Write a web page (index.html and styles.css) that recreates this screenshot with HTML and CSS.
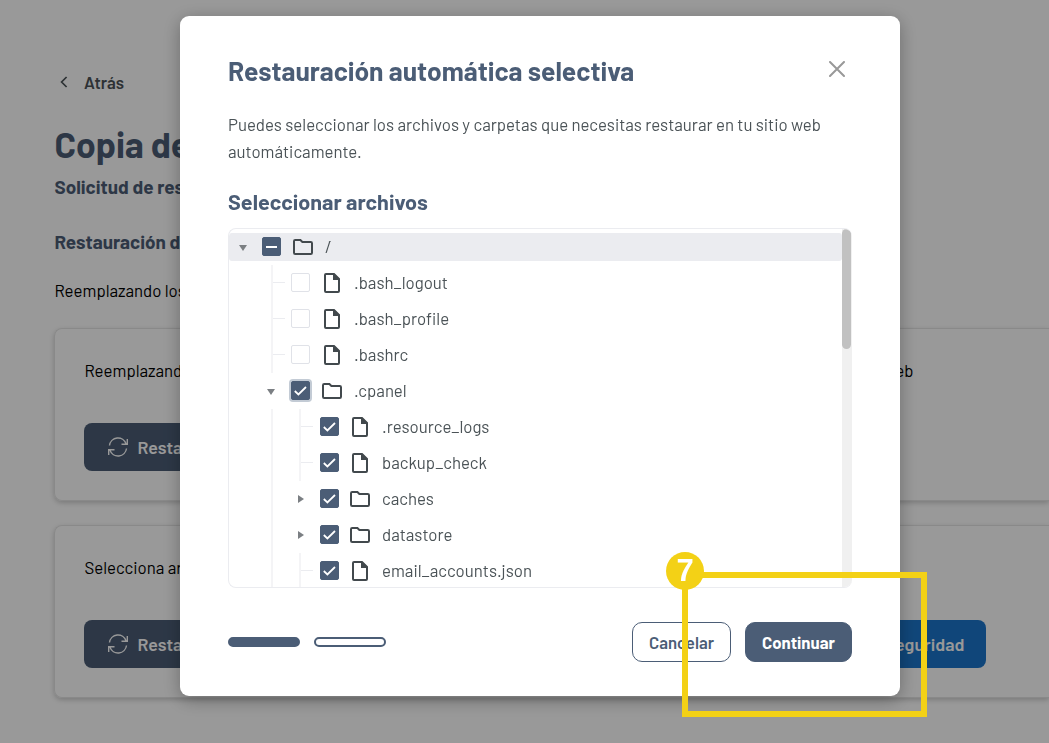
FILE: index.html
```html
<!DOCTYPE html>
<html lang="es">
<head>
    <meta charset="UTF-8">
    <meta name="viewport" content="width=device-width, initial-scale=1.0">
    <title>Copia de seguridad</title>
    <link rel="stylesheet" href="styles.css">
</head>
<body>

    <!-- Iconos -->
    <svg class="sprite" xmlns="http://www.w3.org/2000/svg">
        <symbol id="folder" viewBox="0 0 20 16">
            <path d="M1 2.2Q1 1 2.2 1H7.4L9.4 3H17.8Q19 3 19 4.2V13.8Q19 15 17.8 15H2.2Q1 15 1 13.8Z" fill="none" stroke="#42494d" stroke-width="2"/>
        </symbol>
        <symbol id="file" viewBox="0 0 16 20">
            <path d="M1 2Q1 1 2 1H10L15 6V18Q15 19 14 19H2Q1 19 1 18Z" fill="none" stroke="#42494d" stroke-width="2"/>
            <path d="M9 1H10.5L15.5 6V7H9Z" fill="#42494d"/>
        </symbol>
        <symbol id="check" viewBox="0 0 19 19">
            <path d="M3.8 10L7.4 13.4L15 6" fill="none" stroke="#fff" stroke-width="1.8"/>
        </symbol>
        <symbol id="refresh" viewBox="0 0 20 20">
            <g fill="none" stroke="currentColor" stroke-width="1.4">
                <path d="M1.5 8.5A8.5 8.5 0 0 1 18 6.8M19.3 2V7.3H13.5"/>
                <path d="M18.5 11.5A8.5 8.5 0 0 1 2 13.2M.7 18V12.7H6.5"/>
            </g>
        </symbol>
    </svg>

    <div class="page">
        <a class="back">
            <svg width="8" height="12" viewBox="0 0 8 12"><path d="M6.6 1L1.6 6L6.6 11" fill="none" stroke="currentColor" stroke-width="1.7"/></svg>
            <span>Atrás</span>
        </a>
        <h1>Copia de</h1>
        <h2 class="request">Solicitud de res</h2>
        <h2 class="restore">Restauración d</h2>
        <p class="intro">Reemplazando los</p>

        <div class="card">
            <p class="card-text"><span>Reemplazando</span><span>web</span></p>
            <div class="card-actions">
                <a class="btn-main"><svg width="20" height="20"><use href="#refresh"/></svg><span>Restaurar</span></a>
            </div>
        </div>

        <div class="card">
            <p class="card-text"><span>Selecciona archivos</span></p>
            <div class="card-actions">
                <a class="btn-main"><svg width="20" height="20"><use href="#refresh"/></svg><span>Restaurar</span></a>
                <a class="btn-main blue"><span>seguridad</span></a>
            </div>
        </div>
    </div>

    <div class="overlay">
        <div class="modal">
            <header class="modal-header">
                <h2>Restauración automática selectiva</h2>
                <svg class="close" width="16" height="16" viewBox="0 0 16 16"><path d="M1 1L15 15M15 1L1 15" stroke="#999" stroke-width="2" stroke-linecap="round"/></svg>
            </header>
            <p class="modal-text">Puedes seleccionar los archivos y carpetas que necesitas restaurar en tu sitio web<br>automáticamente.</p>
            <h3>Seleccionar archivos</h3>

            <!-- Árbol de archivos -->
            <div class="tree-box">
                <div class="tree">
                    <div class="row root"><i class="cell open"></i><i class="box partial"></i><svg class="icon"><use href="#folder" width="20" height="16" y="2"/></svg><span>/</span></div>
                    <div class="row"><i class="cell leaf"></i><i class="box"></i><svg class="icon"><use href="#file" width="16" height="20" x="2"/></svg><span>.bash_logout</span></div>
                    <div class="row"><i class="cell leaf"></i><i class="box"></i><svg class="icon"><use href="#file" width="16" height="20" x="2"/></svg><span>.bash_profile</span></div>
                    <div class="row"><i class="cell leaf"></i><i class="box"></i><svg class="icon"><use href="#file" width="16" height="20" x="2"/></svg><span>.bashrc</span></div>
                    <div class="row"><i class="cell open"></i><i class="box checked focus"><svg><use href="#check"/></svg></i><svg class="icon"><use href="#folder" width="20" height="16" y="2"/></svg><span>.cpanel</span></div>
                    <div class="row level-2"><i class="cell line"></i><i class="cell leaf"></i><i class="box checked"><svg><use href="#check"/></svg></i><svg class="icon"><use href="#file" width="16" height="20" x="2"/></svg><span>.resource_logs</span></div>
                    <div class="row level-2"><i class="cell line"></i><i class="cell leaf"></i><i class="box checked"><svg><use href="#check"/></svg></i><svg class="icon"><use href="#file" width="16" height="20" x="2"/></svg><span>backup_check</span></div>
                    <div class="row level-2"><i class="cell line"></i><i class="cell closed"></i><i class="box checked"><svg><use href="#check"/></svg></i><svg class="icon"><use href="#folder" width="20" height="16" y="2"/></svg><span>caches</span></div>
                    <div class="row level-2"><i class="cell line"></i><i class="cell closed"></i><i class="box checked"><svg><use href="#check"/></svg></i><svg class="icon"><use href="#folder" width="20" height="16" y="2"/></svg><span>datastore</span></div>
                    <div class="row level-2"><i class="cell line"></i><i class="cell leaf"></i><i class="box checked"><svg><use href="#check"/></svg></i><svg class="icon"><use href="#file" width="16" height="20" x="2"/></svg><span>email_accounts.json</span></div>
                </div>
                <div class="scrollbar"><div class="thumb"></div></div>
            </div>

            <footer class="modal-footer">
                <div class="steps"><i class="step done"></i><i class="step"></i></div>
                <div class="buttons">
                    <button class="btn cancel">Cancelar</button>
                    <button class="btn next">Continuar</button>
                </div>
            </footer>
        </div>
    </div>

    <div class="callout"><span class="callout-number">7</span></div>

</body>
</html>
```
FILE: styles.css
```css
:root {
    --primary: #4b5d76;
    --blue: #1c76cb;
    --text: #4b5357;
    --line: #ebecf0;
    --yellow: #f3d116;
    --font-family: Barlow, Roboto, "Liberation Sans", sans-serif;
}

* {
    box-sizing: border-box;
}

body {
    margin: 0;
    height: 743px;
    overflow: hidden;
    background: #fff;
    color: #000;
    font-family: var(--font-family);
    font-size: 16.8px;
}

h1, h2, h3, p {
    margin: 0;
    white-space: nowrap;
}

h1, h2, h3 {
    font-weight: 700;
    color: var(--primary);
}

.sprite {
    position: absolute;
    width: 0;
    height: 0;
}

/* Página de fondo */
.page {
    padding: 69px 0 0 54.4px;
}

.back {
    display: flex;
    align-items: center;
    gap: 15.6px;
    height: 26px;
    padding-left: 6px;
    font-weight: 600;
    color: var(--text);
}

.page h1 {
    margin-top: 26px;
    font-size: 35.5px;
    line-height: 46px;
}

.page h2 {
    font-size: 18.9px;
    line-height: 26px;
}

.page .request {
    margin-top: 7px;
}

.page .restore {
    margin-top: 29px;
}

.intro {
    margin-top: 22px;
    line-height: 26px;
}

.card {
    height: 173px;
    margin: 25px 0 0;
    padding: 29px;
    border: 1px solid #e4e4e4;
    border-right: 0;
    border-radius: 8px 0 0 8px;
    box-shadow: 0 2px 5px rgba(0, 0, 0, 0.2);
}

.card + .card {
    margin-top: 24px;
}

.card-text {
    display: flex;
    justify-content: space-between;
    width: 829px;
    line-height: 25px;
}

.card-actions {
    display: flex;
    justify-content: space-between;
    width: 902px;
    margin-top: 40px;
}

.btn-main {
    display: flex;
    align-items: center;
    gap: 9px;
    height: 48px;
    padding: 0 22px 0 24px;
    border-radius: 8px;
    background: var(--primary);
    color: #fff;
    font-size: 17.8px;
    font-weight: 600;
}

.btn-main.blue {
    background: var(--blue);
}

/* Ventana modal */
.overlay {
    position: fixed;
    inset: 0;
    padding: 16px 0 0 180px;
    background: rgba(0, 0, 0, 0.4);
}

.modal {
    width: 720px;
    height: 680px;
    padding: 36px 48px 0;
    border-radius: 9px;
    background: #fff;
    color: var(--text);
    box-shadow: 0 4px 18px rgba(0, 0, 0, 0.3);
}

.modal-header {
    display: flex;
    justify-content: space-between;
    height: 40px;
    padding-right: 7px;
}

.modal-header h2 {
    font-size: 26.4px;
    line-height: 37px;
}

.close {
    margin-top: 9px;
}

.modal-text {
    margin-top: 19px;
    line-height: 27px;
}

.modal h3 {
    margin-top: 21px;
    font-size: 21.6px;
    line-height: 30px;
}

.tree-box {
    display: flex;
    height: 360px;
    margin-top: 12px;
    border: 1px solid var(--line);
    border-right: 0;
    border-radius: 8px;
    overflow: hidden;
}

.tree {
    flex: 1;
}

.row {
    display: flex;
    align-items: center;
    height: 36px;
    padding-left: 28px;
}

.row.root {
    height: 28px;
    margin: 4px 0;
    padding-left: 0;
    border-radius: 3px;
    background: var(--line);
}

.row span {
    margin-top: -2px;
}

.cell {
    flex: none;
    width: 28px;
    height: 36px;
    display: flex;
    align-items: center;
    justify-content: center;
}

.line, .leaf {
    background: linear-gradient(#f4f4f6, #f4f4f6) 14px 0 / 2px 100% no-repeat;
}

.leaf::after {
    content: '';
    width: 13px;
    height: 1px;
    margin: -1px 0 0 16px;
    background: var(--line);
}

.open::after {
    content: '';
    margin-top: 1px;
    border: 4.5px solid transparent;
    border-top: 6px solid #7b7f83;
    border-bottom: 0;
}

.closed::after {
    content: '';
    margin-left: 3px;
    border: 4.5px solid transparent;
    border-left: 6px solid #7b7f83;
    border-right: 0;
}

.box {
    display: flex;
    align-items: center;
    justify-content: center;
    flex: none;
    width: 19px;
    height: 19px;
    margin: -1px 0 0 6px;
    border: 1px solid #e0e2e8;
    border-radius: 2px;
    background: #fff;
}

.root .box {
    margin-left: 5px;
}

.level-2 .box {
    margin-left: 7px;
}

.box svg {
    flex: none;
    width: 19px;
    height: 19px;
}

.box.checked, .box.partial {
    border-color: var(--primary);
    background: var(--primary);
}

.partial::after {
    content: '';
    width: 11px;
    height: 2px;
    background: #fff;
}

.focus {
    box-shadow: 0 0 0 2px #c3cbd5;
}

.icon {
    flex: none;
    width: 20px;
    height: 20px;
    margin: 0 12px;
}

.level-2 .icon {
    margin-left: 11px;
}

.scrollbar {
    width: 10px;
    background: #f0f0f0;
}

.thumb {
    width: 9px;
    height: 120px;
    border-radius: 5px;
    background: #c1c1c1;
}

.modal-footer {
    display: flex;
    align-items: center;
    justify-content: space-between;
    height: 40px;
    margin-top: 34px;
}

.steps, .buttons {
    display: flex;
    gap: 14px;
}

.step {
    width: 72px;
    height: 10px;
    border: 2px solid var(--primary);
    border-radius: 5px;
}

.step.done {
    background: var(--primary);
}

.btn {
    width: 107px;
    height: 40px;
    padding: 0;
    border: 1px solid var(--primary);
    border-radius: 10px;
    background: var(--primary);
    color: #fff;
    font-family: inherit;
    font-size: 16.8px;
    font-weight: 700;
}

.btn.cancel {
    width: 99px;
    background: #fff;
    color: var(--primary);
    font-weight: 600;
}

/* Señal del paso */
.callout {
    position: absolute;
    left: 682px;
    top: 572px;
    width: 245px;
    height: 145px;
    border: 6px solid var(--yellow);
}

.callout-number {
    position: absolute;
    left: -22px;
    top: -26px;
    width: 38px;
    height: 38px;
    border-radius: 50%;
    background: var(--yellow);
    color: #fff;
    font-family: "Liberation Sans", sans-serif;
    font-size: 31px;
    font-weight: 700;
    line-height: 38px;
    text-align: center;
}
```
